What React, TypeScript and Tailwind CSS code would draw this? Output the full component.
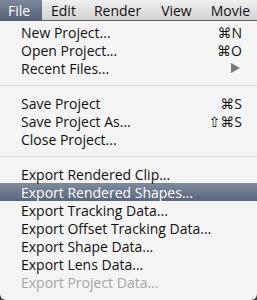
import React from "react";

const font = { fontFamily: '"Lucida Grande", "Open Sans", "DejaVu Sans", sans-serif' };

type Item = { label: string; sc?: string; arrow?: boolean; hi?: boolean; dis?: boolean } | "sep";

const items: Item[] = [
  { label: "New Project...", sc: "⌘N" },
  { label: "Open Project...", sc: "⌘O" },
  { label: "Recent Files...", arrow: true },
  "sep",
  { label: "Save Project", sc: "⌘S" },
  { label: "Save Project As...", sc: "⇧⌘S" },
  { label: "Close Project..." },
  "sep",
  { label: "Export Rendered Clip..." },
  { label: "Export Rendered Shapes...", hi: true },
  { label: "Export Tracking Data..." },
  { label: "Export Offset Tracking Data..." },
  { label: "Export Shape Data..." },
  { label: "Export Lens Data..." },
  { label: "Export Project Data...", dis: true },
];

export default function App() {
  return (
    <div className="w-[257px] h-[300px] overflow-hidden bg-[#3a3a3a] text-[14px]" style={font}>
      <div className="h-[21px] flex items-center bg-gradient-to-b from-[#f0f0f0] to-[#d2d2d2] border-b border-[#5e5e5e] text-[#111]">
        <div className="h-full pl-[8px] w-[42px] flex items-center text-white bg-gradient-to-b from-[#7c889a] to-[#56627a]">File</div>
        <div className="ml-[9px]">Edit</div>
        <div className="ml-[18px]">Render</div>
        <div className="ml-[20px]">View</div>
        <div className="ml-[19px]">Movie</div>
      </div>
      <div className="h-[279px] bg-[#f4f4f4] rounded-b-[6px] pt-[2px]">
        {items.map((it, i) =>
          it === "sep" ? (
            <div key={i} className="h-[17px] flex items-center">
              <div className="w-full h-px bg-[#d8d8d8]" />
            </div>
          ) : (
            <div
              key={i}
              className={
                "h-[18px] flex items-center pl-[21px] pr-[15px] " +
                (it.hi
                  ? "bg-gradient-to-b from-[#7e8a9c] to-[#5a667c] text-white"
                  : it.dis
                  ? "text-[#a6a6a6]"
                  : "text-[#111]")
              }
            >
              <span className="flex-1 whitespace-nowrap">{it.label}</span>
              {it.sc && <span className="whitespace-nowrap">{it.sc}</span>}
              {it.arrow && (
                <svg width="9" height="10" viewBox="0 0 9 10" className="mr-[2px]">
                  <path d="M0 0 L9 5 L0 10 Z" fill="#7a7a7a" />
                </svg>
              )}
            </div>
          )
        )}
      </div>
    </div>
  );
}
